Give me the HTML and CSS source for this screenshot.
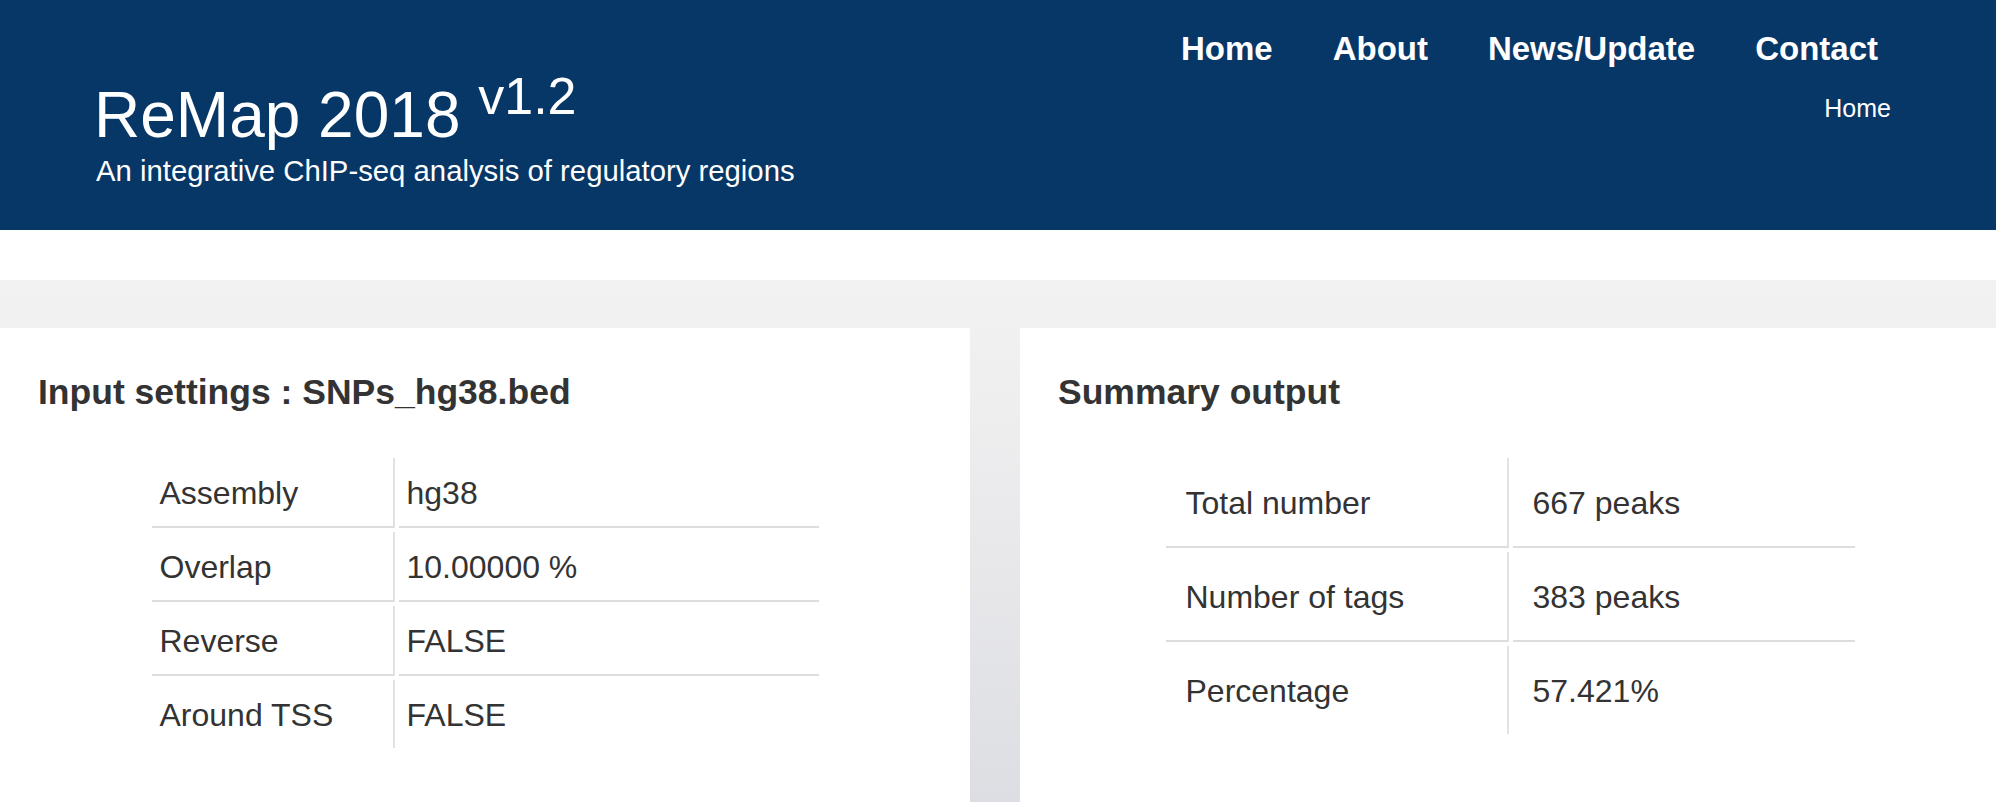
FILE: index.html
```html
<!DOCTYPE html>
<html lang="en">
<head>
<meta charset="utf-8">
<title>ReMap 2018 v1.2</title>
<link rel="stylesheet" href="styles.css">
</head>
<body>
<header class="site-header">
  <div class="brand">
    <h1 class="title">ReMap 2018 <sup class="version">v1.2</sup></h1>
    <p class="subtitle">An integrative ChIP-seq analysis of regulatory regions</p>
  </div>
  <div class="header-right">
    <nav class="main-nav">
      <a href="#">Home</a>
      <a href="#">About</a>
      <a href="#">News/Update</a>
      <a href="#">Contact</a>
    </nav>
    <div class="breadcrumb">Home</div>
  </div>
</header>
<div class="spacer"></div>
<main class="content">
  <section class="card card-left">
    <h2 class="card-title">Input settings : SNPs_hg38.bed</h2>
    <table class="info-table settings-table">
      <colgroup><col class="settings-key"><col></colgroup>
      <tbody>
        <tr><td>Assembly</td><td>hg38</td></tr>
        <tr><td>Overlap</td><td>10.00000 %</td></tr>
        <tr><td>Reverse</td><td>FALSE</td></tr>
        <tr><td>Around TSS</td><td>FALSE</td></tr>
      </tbody>
    </table>
  </section>
  <section class="card card-right">
    <h2 class="card-title">Summary output</h2>
    <table class="info-table summary-table">
      <colgroup><col class="summary-key"><col></colgroup>
      <tbody>
        <tr><td>Total number</td><td>667 peaks</td></tr>
        <tr><td>Number of tags</td><td>383 peaks</td></tr>
        <tr><td>Percentage</td><td>57.421%</td></tr>
      </tbody>
    </table>
  </section>
</main>
</body>
</html>
```
FILE: styles.css
```css
html, body {
  margin: 0;
  padding: 0;
}

body {
  font-family: "Liberation Sans", Arial, Helvetica, sans-serif;
  color: #333333;
  background: #ffffff;
  min-height: 100vh;
  display: flex;
  flex-direction: column;
  overflow-x: hidden;
}

/* Header */
.site-header {
  height: 230px;
  background: #073767;
  color: #ffffff;
  display: flex;
  justify-content: space-between;
  box-sizing: border-box;
  padding: 0 118px 0 94px;
  flex: none;
}

.brand {
  padding-top: 83px;
}

.title {
  margin: 0;
  font-size: 64px;
  line-height: 64px;
  font-weight: normal;
  white-space: nowrap;
}

.version {
  font-size: 52px;
  line-height: 0;
  vertical-align: 23px;
}

.subtitle {
  margin: 7px 0 0 2px;
  font-size: 29.3px;
  line-height: 34px;
  font-weight: 300;
  white-space: nowrap;
}

.header-right {
  padding-top: 29px;
  display: flex;
  flex-direction: column;
  align-items: flex-end;
}

.main-nav {
  display: flex;
  gap: 60px;
}

.main-nav a {
  color: #ffffff;
  text-decoration: none;
  font-weight: bold;
  font-size: 33px;
  line-height: 40px;
}

.breadcrumb {
  margin-top: 24px;
  margin-right: -13px;
  font-size: 25px;
  line-height: 30px;
  font-weight: 300;
}

.spacer {
  height: 50px;
  flex: none;
}

/* Main content */
.content {
  flex: 1;
  display: grid;
  grid-template-columns: 970px 980px;
  column-gap: 50px;
  align-items: stretch;
  padding-top: 48px;
  background: linear-gradient(180deg, #f2f2f2 0%, #eeeeef 25%, #dddee3 100%);
  overflow: hidden;
}

.card {
  background: #ffffff;
  padding: 45px 38px 40px 38px;
  box-sizing: border-box;
}

.card-title {
  margin: 0;
  font-size: 35.5px;
  line-height: 39px;
  font-weight: bold;
  color: #333333;
}

.info-table {
  border-collapse: separate;
  border-spacing: 4px;
  table-layout: fixed;
  margin: 42px auto 0 auto;
  font-size: 32px;
  line-height: 44px;
  color: #333333;
}

.info-table td {
  border-bottom: 2px solid #dddddd;
  white-space: nowrap;
}

.info-table tr:last-child td {
  border-bottom: none;
}

.info-table td:first-child {
  border-right: 2px solid #e2e2e2;
}

.settings-table {
  width: 675px;
}

.settings-key {
  width: 243px;
}

.settings-table td {
  padding: 13px 8px 11px 8px;
}

.summary-table {
  width: 697px;
}

.summary-key {
  width: 343px;
}

.summary-table td {
  padding: 23px 20px 21px 20px;
}
```
